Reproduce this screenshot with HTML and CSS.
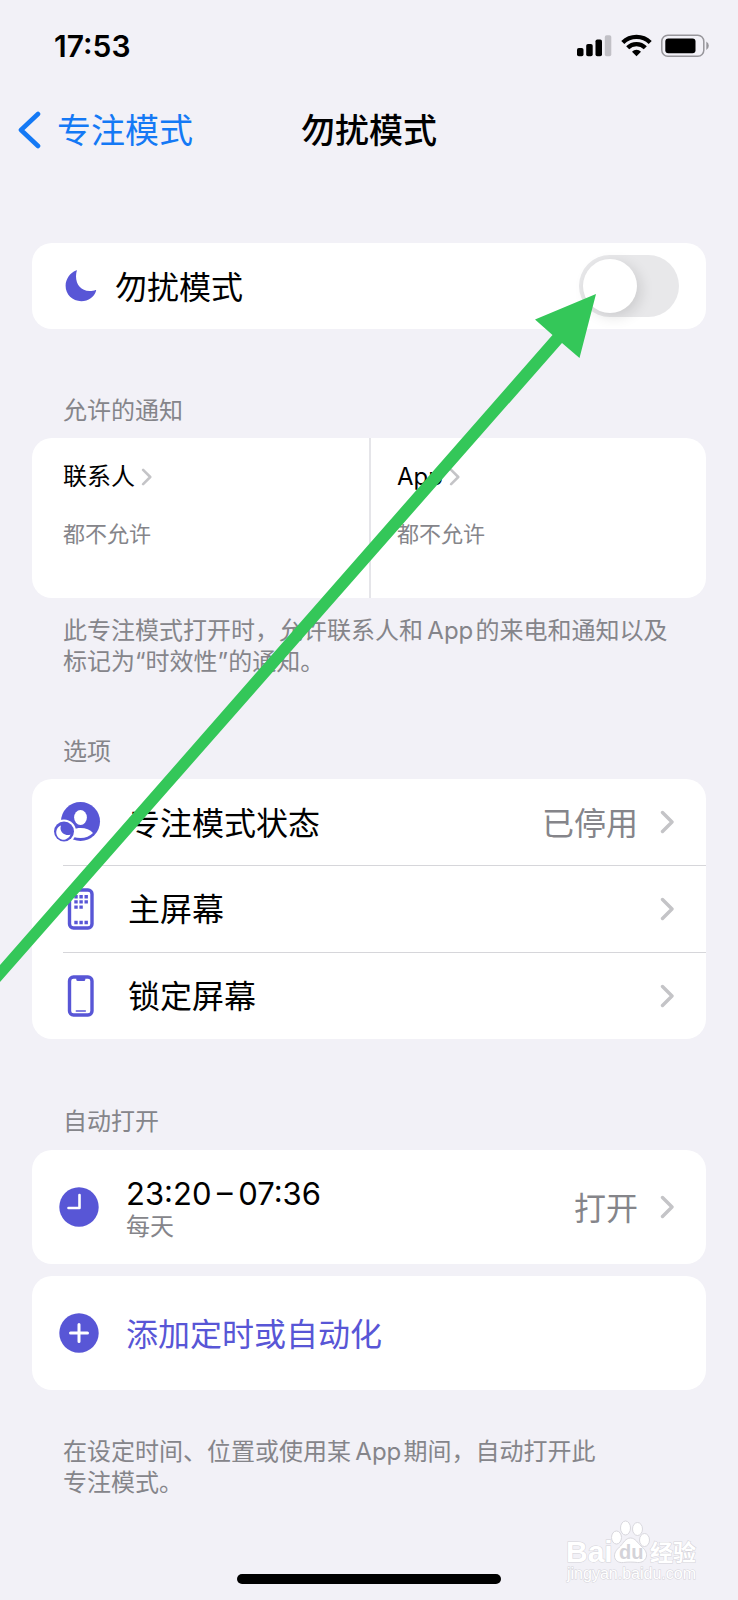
FILE: index.html
```html
<!DOCTYPE html>
<html lang="zh-CN">
<head>
<meta charset="utf-8">
<meta name="viewport" content="width=device-width, initial-scale=1">
<title>勿扰模式</title>
<link rel="stylesheet" href="styles.css">
</head>
<body>
<svg class="defs" aria-hidden="true">
  <symbol id="chevron" viewBox="0 0 14 24"><path d="M2.500 2.500 12 12l-9.500 9.500" fill="none" stroke="currentColor" stroke-width="3.400" stroke-linecap="round" stroke-linejoin="round"/></symbol>
</svg>
<div class="screen">
  <header>
    <div class="status">
      <time class="clock">17:53</time>
      <svg class="status-icons" width="134" height="24" viewBox="0 0 134 24" role="img" aria-label="信号、无线网络、电池">
        <rect x="1" y="14" width="6.500" height="8.300" rx="1.800"/>
        <rect x="10.200" y="10" width="6.500" height="12.300" rx="1.800"/>
        <rect x="19.500" y="5.500" width="6.500" height="16.800" rx="1.800"/>
        <rect x="28.800" y="1.200" width="6.500" height="21.100" rx="1.800" fill="#c1c0c6"/>
        <g fill="none" stroke="#000" stroke-width="4.300">
          <path d="M46.800 8.600a19.300 19.300 0 0 1 27.400 0"/>
          <path d="M51.700 13.700a12.400 12.400 0 0 1 17.600 0"/>
        </g>
        <path d="M60.500 22.200 56 17.700a6.400 6.400 0 0 1 9 0z"/>
        <rect x="85.800" y="1.300" width="42" height="21" rx="6" fill="none" stroke="#97969b" stroke-width="1.500"/>
        <rect x="89.300" y="4.400" width="30.200" height="14.800" rx="3"/>
        <path d="M130.300 7.500q2.500 1.300 2.500 4.300t-2.500 4.300z" fill="#97969b"/>
      </svg>
    </div>
    <nav class="nav">
      <a class="back" href="#">
        <svg width="24" height="38" viewBox="0 0 24 38" aria-hidden="true"><path d="M21 3 4 19l17 16" fill="none" stroke="currentColor" stroke-width="4.600" stroke-linecap="round" stroke-linejoin="round"/></svg>
        <span class="back-text">专注模式</span>
      </a>
      <h1 class="title">勿扰模式</h1>
    </nav>
  </header>

  <main class="content">
    <div class="card toggle-row">
      <svg class="moon" width="32" height="32" viewBox="0 0 32 32" aria-hidden="true"><path d="M11.800.8A17.500 17.500 0 0 0 11 6.300C11 14.800 16.300 21 24.500 21c2.300 0 4.700-.4 6-1 .5-.2.800.1.600.700C29.300 27 23.500 31.200 16.300 31.200 7.300 31.200.6 24.600.6 15.800.6 9.200 5 2.700 11 .5c.6-.3 1-.1.800.300z" fill="currentColor"/></svg>
      <label class="label" for="dnd">勿扰模式</label>
      <input class="switch" id="dnd" type="checkbox" role="switch">
    </div>

    <section class="section">
      <h2 class="heading">允许的通知</h2>
      <div class="card split">
        <a class="cell" href="#">
          <span class="cell-title">联系人<svg width="11" height="18" aria-hidden="true"><use href="#chevron"/></svg></span>
          <span class="cell-value">都不允许</span>
        </a>
        <a class="cell" href="#">
          <span class="cell-title">App<svg width="11" height="18" aria-hidden="true"><use href="#chevron"/></svg></span>
          <span class="cell-value">都不允许</span>
        </a>
      </div>
      <p class="note">此专注模式打开时，允许联系人和&#8201;App&#8202;的来电和通知以及标记为“时效性”的通知。</p>
    </section>

    <section class="section section-options">
      <h2 class="heading">选项</h2>
      <div class="card list">
        <a class="row" href="#">
          <svg class="icon" width="48" height="42" viewBox="0 0 48 42" aria-hidden="true">
            <circle cx="27.500" cy="20.500" r="19.500" fill="currentColor"/>
            <ellipse cx="27.500" cy="16.500" rx="6.400" ry="7.400" fill="#fff"/>
            <path d="M14.500 33c2.500-4 7.500-6 13-6s9.500 1.800 12.500 5c-3 3-7.500 5-12.500 5s-9-1.500-13-4z" fill="#fff"/>
            <circle cx="11" cy="30.500" r="12" fill="#fff"/>
            <circle cx="11" cy="30.500" r="10" fill="currentColor"/>
            <path d="M8 24.500A7.300 7.300 0 1 0 17.500 33.500C13 35.500 5.500 31.500 8 24.500z" fill="#fff"/>
          </svg>
          <span class="label">专注模式状态</span>
          <span class="value">已停用</span>
          <svg class="chev" width="14" height="24" aria-hidden="true"><use href="#chevron"/></svg>
        </a>
        <a class="row" href="#">
          <svg class="icon" width="48" height="42" viewBox="0 0 48 42" aria-hidden="true">
            <rect x="16.500" y="2" width="22.500" height="38" rx="4" fill="none" stroke="currentColor" stroke-width="3.400"/>
            <path d="M21.300 8.700h14M21.300 13.900h14M21.300 19.100h9M21.300 34.500h14" stroke="currentColor" stroke-width="3.400" stroke-dasharray="3.400 1.700" fill="none"/>
          </svg>
          <span class="label">主屏幕</span>
          <svg class="chev" width="14" height="24" aria-hidden="true"><use href="#chevron"/></svg>
        </a>
        <a class="row" href="#">
          <svg class="icon" width="48" height="42" viewBox="0 0 48 42" aria-hidden="true">
            <rect x="16.500" y="2" width="22.500" height="38" rx="4" fill="none" stroke="currentColor" stroke-width="3.400"/>
            <path d="M23.300 2h9v2.500a1.500 1.500 0 0 1-1.500 1.500h-6a1.500 1.500 0 0 1-1.500-1.500z" fill="currentColor"/>
            <path d="M23.300 36h9" stroke="currentColor" stroke-width="1.500" stroke-linecap="round"/>
          </svg>
          <span class="label">锁定屏幕</span>
          <svg class="chev" width="14" height="24" aria-hidden="true"><use href="#chevron"/></svg>
        </a>
      </div>
    </section>

    <section class="section section-auto">
      <h2 class="heading">自动打开</h2>
      <div class="stack">
        <a class="card auto" href="#">
          <svg class="disc" width="40" height="40" viewBox="0 0 40 40" aria-hidden="true"><circle cx="20" cy="20" r="19.700" fill="currentColor"/><path d="M20.500 8v13H9.500" fill="none" stroke="#fff" stroke-width="2.600" stroke-linecap="round" stroke-linejoin="round"/></svg>
          <span class="schedule">
            <span class="hours">23:20&#8201;–&#8201;07:36</span>
            <span class="days">每天</span>
          </span>
          <span class="value">打开</span>
          <svg class="chev" width="14" height="24" aria-hidden="true"><use href="#chevron"/></svg>
        </a>
        <button class="card auto" type="button">
          <svg class="disc" width="40" height="40" viewBox="0 0 40 40" aria-hidden="true"><circle cx="20" cy="20" r="19.700" fill="currentColor"/><path d="M20 11.500v17M11.500 20h17" stroke="#fff" stroke-width="3" stroke-linecap="round"/></svg>
          <span class="add">添加定时或自动化</span>
        </button>
      </div>
      <p class="note note-last">在设定时间、位置或使用某&#8201;App&#8202;期间，自动打开此<br>专注模式。</p>
    </section>
  </main>

  <div class="home-bar"></div>

  <svg class="arrow" viewBox="0 0 738 1600" aria-hidden="true"><path d="M596 294 579.500 358 562 343 0 982V965L552.500 335 535 319.500z" fill="#34c759"/></svg>

  <svg class="watermark" width="144" height="72" viewBox="0 0 144 72" role="img" aria-label="Baidu 经验">
    <g fill="#fff" stroke="#d9d8de" stroke-width="1">
      <ellipse cx="54.500" cy="18.500" rx="5" ry="6.500"/>
      <ellipse cx="63.500" cy="9" rx="5" ry="7"/>
      <ellipse cx="75.500" cy="10" rx="5" ry="6.500"/>
      <ellipse cx="82.500" cy="21" rx="5" ry="6.500"/>
      <path d="M68.500 19c5 0 7 5 10.500 8s6 6 5.500 10-4.500 7-9 6.500-9-.7-14 0-9-2-9-6.500 3-7 6-10 5-8 10-8z"/>
    </g>
    <text class="wm-brand" x="4" y="43">Bai</text>
    <text class="wm-du" x="57" y="40">du</text>
    <text class="wm-cn" x="88" y="42">经验</text>
    <text class="wm-url" x="5" y="60">jingyan.baidu.com</text>
  </svg>
</div>
</body>
</html>
```
FILE: styles.css
```css
* {
  box-sizing: border-box;
}

body {
  margin: 0;
  background: #f2f1f7;
  color: #000;
  font-family: Inter, "Noto Sans CJK SC", sans-serif;
}

h1,
h2,
p {
  margin: 0;
  font-weight: 400;
}

a {
  color: inherit;
  text-decoration: none;
}

.defs {
  display: none;
}

.screen {
  position: relative;
  display: flex;
  flex-direction: column;
  min-height: 100vh;
  padding-bottom: 16px;
  overflow: hidden;
}

.status {
  display: flex;
  align-items: center;
  justify-content: space-between;
  height: 91px;
  padding: 0 28px 0 54px;
}

.clock {
  font-size: 30px;
  font-weight: 600;
}

.nav {
  display: grid;
  grid-template-columns: 1fr auto 1fr;
  align-items: center;
  height: 78px;
  padding: 0 17px;
  font-size: 34px;
  line-height: 48px;
}

.back {
  display: flex;
  align-items: center;
  gap: 16px;
  color: #1479f5;
}

.back-text,
.title {
  padding-top: 2px;
}

.title {
  font-size: 34px;
  font-weight: 500;
}

.content {
  padding: 74px 32px 0;
}

.card {
  background: #fff;
  border-radius: 20px;
}

.label,
.value,
.add {
  padding-top: 3px;
  font-size: 32px;
  line-height: 48px;
}

.toggle-row {
  display: flex;
  align-items: center;
  height: 86px;
  padding: 0 27px 0 33px;
}

.moon,
.icon,
.disc {
  flex: none;
  color: #5856d6;
}

.toggle-row .label {
  flex: 1;
  margin-left: 18px;
}

.switch {
  appearance: none;
  width: 100px;
  height: 62px;
  margin: 0;
  padding: 4px;
  border-radius: 31px;
  background: #e8e8ea;
}

.switch::before {
  content: "";
  display: block;
  width: 54px;
  height: 54px;
  border-radius: 50%;
  background: #fff;
  box-shadow: 4px 4px 14px rgba(0, 0, 0, 0.12);
}

.switch:checked {
  background: #34c759;
}

.switch:checked::before {
  margin-left: auto;
}

.section {
  margin-top: 66px;
}

.section-options {
  margin-top: 59px;
}

.section-auto {
  margin-top: 67px;
}

.heading {
  margin-bottom: 11px;
  padding: 0 31px;
  color: #85858a;
  font-size: 24px;
  line-height: 32px;
}

.section-auto .heading {
  margin-bottom: 12px;
}

.split {
  display: grid;
  grid-template-columns: 1fr 1fr;
}

.cell {
  display: flex;
  flex-direction: column;
  gap: 25px;
  min-height: 160px;
  padding: 23px 31px;
}

.cell + .cell {
  padding-left: 26px;
  border-left: 2px solid #e5e5e9;
}

.cell-title {
  display: flex;
  align-items: center;
  gap: 6px;
  font-size: 24px;
  line-height: 32px;
}

.cell-title svg,
.chev {
  flex: none;
  color: #c4c4c7;
}

.cell-value {
  color: #85858a;
  font-size: 22px;
  line-height: 32px;
}

.note {
  margin-top: 17px;
  padding: 0 31px;
  color: #85858a;
  font-size: 24px;
  line-height: 31px;
}

.note-last {
  margin-top: 46px;
}

.row {
  position: relative;
  display: flex;
  align-items: center;
  height: 86px;
  padding: 0 32px 0 21px;
}

.row + .row {
  height: 87px;
}

.row + .row::before {
  content: "";
  position: absolute;
  top: 0;
  right: 0;
  left: 31px;
  height: 1px;
  background: #d6d6da;
}

.row .label {
  flex: 1;
  margin-left: 27px;
}

.value {
  margin-right: 22px;
  color: #85858a;
}

.stack {
  display: grid;
  gap: 12px;
}

.auto {
  display: flex;
  align-items: center;
  width: 100%;
  height: 114px;
  padding: 0 32px 0 27px;
  border: 0;
  font-family: inherit;
  text-align: left;
}

.schedule {
  display: flex;
  flex: 1;
  flex-direction: column;
  margin-left: 27px;
  padding-top: 5px;
}

.hours {
  font-size: 31px;
  line-height: 34px;
}

.days {
  color: #85858a;
  font-size: 24px;
  line-height: 32px;
}

.add {
  margin-left: 27px;
  color: #5856d6;
}

.home-bar {
  align-self: center;
  width: 264px;
  height: 10px;
  margin-top: auto;
  border-radius: 5px;
  background: #000;
}

.arrow {
  position: absolute;
  top: 0;
  left: 0;
  width: 100%;
  pointer-events: none;
}

.watermark {
  position: absolute;
  right: 32px;
  bottom: 9px;
  pointer-events: none;
}

.watermark text {
  fill: #fff;
  stroke: #d4d3d9;
  stroke-width: 1px;
  paint-order: stroke;
}

.wm-brand {
  font: 700 30px "Liberation Sans", sans-serif;
}

.watermark .wm-du {
  fill: #d4d3d9;
  stroke: none;
  font: 700 20px "Liberation Sans", sans-serif;
}

.wm-cn {
  font: 700 23px "Noto Sans CJK SC", sans-serif;
}

.wm-url {
  font: 400 16px "Liberation Sans", sans-serif;
}
```
